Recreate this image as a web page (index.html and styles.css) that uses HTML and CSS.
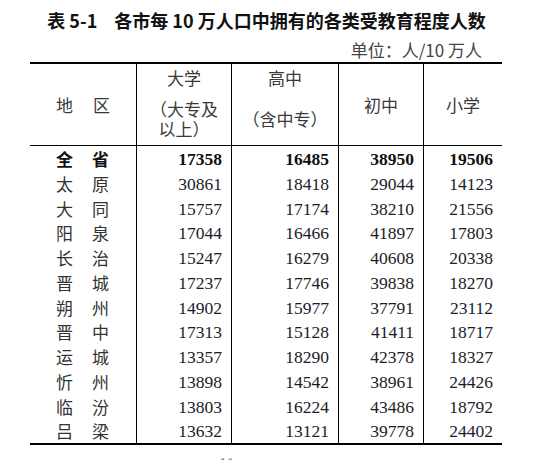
FILE: index.html
```html
<!DOCTYPE html>
<html lang="zh-CN">
<head>
<meta charset="utf-8">
<title>表 5-1</title>
<link rel="stylesheet" href="styles.css">
</head>
<body>
<div class="page">
  <h1 class="title"><span class="tno">表 5-1</span>各市每 10 万人口中拥有的各类受教育程度人数</h1>
  <div class="unit">单位：人/10 万人</div>
  <div class="tbl">
    <div class="thead">
      <div class="hc hc-mid"><span class="pair"><span>地</span><span>区</span></span></div>
      <div class="hc sep">
        <div class="h-top">大学</div>
        <div class="h-sub">（大专及<br>以上）</div>
      </div>
      <div class="hc sep">
        <div class="h-top">高中</div>
        <div class="h-sub">（含中专）</div>
      </div>
      <div class="hc hc-mid sep">初中</div>
      <div class="hc hc-mid sep">小学</div>
    </div>
    <div class="tbody">
      <div class="c name total"><span>全</span><span>省</span></div><div class="c num total">17358</div><div class="c num total">16485</div><div class="c num total">38950</div><div class="c num total">19506</div>
      <div class="c name"><span>太</span><span>原</span></div><div class="c num">30861</div><div class="c num">18418</div><div class="c num">29044</div><div class="c num">14123</div>
      <div class="c name"><span>大</span><span>同</span></div><div class="c num">15757</div><div class="c num">17174</div><div class="c num">38210</div><div class="c num">21556</div>
      <div class="c name"><span>阳</span><span>泉</span></div><div class="c num">17044</div><div class="c num">16466</div><div class="c num">41897</div><div class="c num">17803</div>
      <div class="c name"><span>长</span><span>治</span></div><div class="c num">15247</div><div class="c num">16279</div><div class="c num">40608</div><div class="c num">20338</div>
      <div class="c name"><span>晋</span><span>城</span></div><div class="c num">17237</div><div class="c num">17746</div><div class="c num">39838</div><div class="c num">18270</div>
      <div class="c name"><span>朔</span><span>州</span></div><div class="c num">14902</div><div class="c num">15977</div><div class="c num">37791</div><div class="c num">23112</div>
      <div class="c name"><span>晋</span><span>中</span></div><div class="c num">17313</div><div class="c num">15128</div><div class="c num">41411</div><div class="c num">18717</div>
      <div class="c name"><span>运</span><span>城</span></div><div class="c num">13357</div><div class="c num">18290</div><div class="c num">42378</div><div class="c num">18327</div>
      <div class="c name"><span>忻</span><span>州</span></div><div class="c num">13898</div><div class="c num">14542</div><div class="c num">38961</div><div class="c num">24426</div>
      <div class="c name"><span>临</span><span>汾</span></div><div class="c num">13803</div><div class="c num">16224</div><div class="c num">43486</div><div class="c num">18792</div>
      <div class="c name"><span>吕</span><span>梁</span></div><div class="c num">13632</div><div class="c num">13121</div><div class="c num">39778</div><div class="c num">24402</div>
    </div>
  </div>
  <div class="pageno">11</div>
</div>
</body>
</html>
```
FILE: styles.css
```css
html, body {
  margin: 0;
  padding: 0;
  background: #ffffff;
}

.page {
  width: 533px;
  height: 460px;
  overflow: hidden;
  font-family: "Noto Sans CJK SC", "Liberation Sans", sans-serif;
  color: #333333;
}

.title {
  margin: 0;
  padding-top: 8px;
  font-size: 18px;
  font-weight: bold;
  line-height: 24px;
  text-align: center;
  color: #111111;
  white-space: nowrap;
}

.tno {
  margin-right: 17px;
}

.unit {
  margin-top: 8px;
  padding-right: 51px;
  font-size: 17px;
  line-height: 20px;
  text-align: right;
  color: #444444;
}

.tbl {
  margin: 2px 0 0 30px;
  width: 472px;
  border-top: 2px solid #000000;
  border-bottom: 2px solid #000000;
}

.thead,
.tbody {
  display: grid;
  grid-template-columns: 106px 95px 107px 85px 79px;
}

.thead {
  height: 81px;
  border-bottom: 1px solid #000000;
  font-size: 17px;
  color: #3a3a3a;
}

.hc {
  display: flex;
  flex-direction: column;
  text-align: center;
}

.hc-mid {
  justify-content: center;
  align-items: center;
}

.sep {
  border-left: 1px solid #000000;
}

.h-top {
  height: 28px;
  line-height: 28px;
}

.h-sub {
  flex: 1;
  display: flex;
  align-items: center;
  justify-content: center;
  line-height: 20px;
}

.pair {
  display: flex;
  gap: 20px;
}

.tbody {
  grid-auto-rows: 24.75px;
}

.c {
  padding-top: 1px;
  line-height: 24.75px;
  white-space: nowrap;
}

.name {
  display: flex;
  justify-content: center;
  gap: 19px;
  padding-right: 1px;
  font-size: 17px;
  color: #333333;
}

.num {
  border-left: 1px solid #000000;
  padding-right: 9px;
  text-align: right;
  font-family: "Liberation Serif", "Times New Roman", serif;
  font-size: 17.5px;
  color: #1c1c28;
}

.total {
  font-weight: bold;
  color: #111111;
}

.name.total {
  color: #111111;
}

.pageno {
  margin-top: 10px;
  padding-left: 219px;
  font-family: "Liberation Serif", serif;
  font-size: 16px;
  line-height: 18px;
  color: #888888;
}
```
